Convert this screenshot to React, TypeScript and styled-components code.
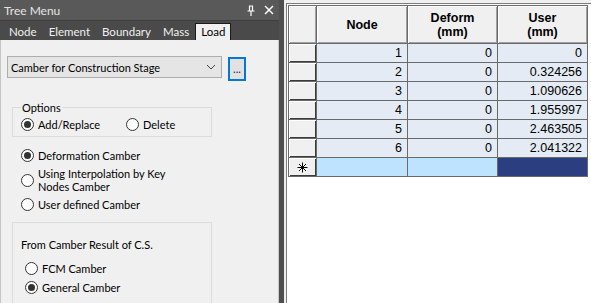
import React from 'react';
import styled, { createGlobalStyle } from 'styled-components';

const GlobalStyle = createGlobalStyle`
  html, body {
    margin: 0;
    padding: 0;
    overflow: hidden;
    background: #ffffff;
  }
`;

type Row = { node: number; deform: string; user: string };

const rows: Row[] = [
  { node: 1, deform: '0', user: '0' },
  { node: 2, deform: '0', user: '0.324256' },
  { node: 3, deform: '0', user: '1.090626' },
  { node: 4, deform: '0', user: '1.955997' },
  { node: 5, deform: '0', user: '2.463505' },
  { node: 6, deform: '0', user: '2.041322' },
];

const tabs = ['Node', 'Element', 'Boundary', 'Mass', 'Load'];

const Radio = ({ checked, children }: { checked?: boolean; children: React.ReactNode }) => (
  <RadioRow>
    <RadioCircle>{checked && <RadioDot />}</RadioCircle>
    <RadioLabel>{children}</RadioLabel>
  </RadioRow>
);

const PinIcon = () => (
  <svg width="10" height="11" viewBox="0 0 10 11">
    <path d="M3 1h4M3.5 1v5M6.5 1v5M1.5 6h7M5 6v5" stroke="#fff" strokeWidth="1.2" fill="none" />
  </svg>
);

const CloseIcon = () => (
  <svg width="10" height="10" viewBox="0 0 10 10">
    <path d="M1 1l8 8M9 1l-8 8" stroke="#fff" strokeWidth="1.5" fill="none" />
  </svg>
);

const Chevron = () => (
  <svg width="10" height="6" viewBox="0 0 10 6">
    <path d="M1 1l4 4 4-4" stroke="#444" strokeWidth="1" fill="none" />
  </svg>
);

// marker of the "new row" line in the grid
const NewRowMark = () => (
  <svg width="11" height="11" viewBox="0 0 11 11">
    <path d="M5.5 0.5v10M0.5 5.5h10M2 2l7 7M9 2l-7 7" stroke="#000" strokeWidth="1" fill="none" />
  </svg>
);

const App = () => {
  return (
    <Layout>
      <GlobalStyle />
      <LeftPanel>
        <TitleBar>
          <Title>Tree Menu</Title>
          <TitleIcons>
            <PinIcon />
            <CloseIcon />
          </TitleIcons>
        </TitleBar>
        <TabBar>
          {tabs.map((t) => (
            <Tab key={t} $active={t === 'Load'}>
              {t}
            </Tab>
          ))}
        </TabBar>
        <Content>
          <ComboRow>
            <Combo>
              <span>Camber for Construction Stage</span>
              <Chevron />
            </Combo>
            <DotsButton>...</DotsButton>
          </ComboRow>

          <Group>
            <Legend>Options</Legend>
            <InlineRadios>
              <Radio checked>Add/Replace</Radio>
              <Radio>Delete</Radio>
            </InlineRadios>
          </Group>

          <RadioList>
            <Radio checked>Deformation Camber</Radio>
            <Radio>
              Using Interpolation by Key
              <br />
              Nodes Camber
            </Radio>
            <Radio>User defined Camber</Radio>
          </RadioList>

          <ResultBox>
            <BoxTitle>From Camber Result of C.S.</BoxTitle>
            <SubRadios>
              <Radio>FCM Camber</Radio>
              <Radio checked>General Camber</Radio>
            </SubRadios>
          </ResultBox>
        </Content>
      </LeftPanel>

      <Splitter />

      <RightPanel>
        <Grid>
          <HeadCell />
          <HeadCell>Node</HeadCell>
          <HeadCell>
            Deform
            <br />
            (mm)
          </HeadCell>
          <HeadCell>
            User
            <br />
            (mm)
          </HeadCell>
          {rows.map((r) => (
            <React.Fragment key={r.node}>
              <RowHead />
              <Cell>{r.node}</Cell>
              <Cell>{r.deform}</Cell>
              <Cell>{r.user}</Cell>
            </React.Fragment>
          ))}
          <RowHead>
            <NewRowMark />
          </RowHead>
          <Cell $variant="new" />
          <Cell $variant="new" />
          <Cell $variant="selected" />
        </Grid>
      </RightPanel>
    </Layout>
  );
};

const Layout = styled.div`
  display: flex;
  width: 591px;
  height: 303px;
  overflow: hidden;
  font-family: Lato, 'Noto Sans', sans-serif;
  font-size: 11px;
  color: #000;
`;

const LeftPanel = styled.div`
  width: 279px;
  display: flex;
  flex-direction: column;
  flex-shrink: 0;
`;

const TitleBar = styled.div`
  height: 20px;
  background: #595959;
  display: flex;
  align-items: center;
  justify-content: space-between;
  padding: 0 5px 0 4px;
  box-sizing: border-box;
`;

const Title = styled.span`
  color: #e4e4e4;
  font-size: 12px;
`;

const TitleIcons = styled.div`
  display: flex;
  align-items: center;
  gap: 8px;
`;

const TabBar = styled.div`
  height: 20px;
  background: #4a4a4a;
  display: flex;
  align-items: flex-end;
  padding-left: 3px;
  border-top: 1px solid #3e3e3e;
  box-sizing: border-box;
`;

const Tab = styled.div<{ $active?: boolean }>`
  height: 17px;
  line-height: 16px;
  padding: 0 5px;
  font-size: 11.5px;
  box-sizing: border-box;
  color: ${(p) => (p.$active ? '#000' : '#f0f0f0')};
  background: ${(p) => (p.$active ? '#f0f0f0' : 'transparent')};
  border: 1px solid ${(p) => (p.$active ? '#1a1a1a' : 'transparent')};
  border-bottom: none;
`;

const Content = styled.div`
  flex: 1;
  background: #f0f0f0;
  border-left: 1px solid #c4c4c4;
  border-right: 1px solid #c8c8c8;
  padding: 16px 0 0 6px;
  display: flex;
  flex-direction: column;
`;

const ComboRow = styled.div`
  display: flex;
  align-items: flex-start;
  gap: 6px;
`;

const Combo = styled.div`
  width: 215px;
  height: 22px;
  box-sizing: border-box;
  border: 1px solid #adadad;
  background: #e5e5e5;
  display: flex;
  align-items: center;
  justify-content: space-between;
  padding: 0 5px 0 3px;
`;

const DotsButton = styled.div`
  width: 18px;
  height: 24px;
  margin-top: 1px;
  box-sizing: border-box;
  border: 2px solid #0078d7;
  background: #e1e1e1;
  display: flex;
  align-items: flex-end;
  justify-content: center;
  padding-bottom: 5px;
  font-size: 11px;
  line-height: 1;
  color: #1a1a6a;
`;

const Group = styled.fieldset`
  margin: 20px 0 0 5px;
  width: 200px;
  height: 36px;
  box-sizing: border-box;
  border: 1px solid #dcdcdc;
  padding: 0 0 0 8px;
`;

const Legend = styled.legend`
  padding: 0 1px;
  margin-left: 0;
  line-height: 13px;
`;

const InlineRadios = styled.div`
  display: grid;
  grid-template-columns: 105px auto;
  margin-top: 4px;
`;

const RadioRow = styled.div`
  display: flex;
  align-items: center;
  gap: 4px;
`;

const RadioCircle = styled.div`
  width: 13px;
  height: 13px;
  box-sizing: border-box;
  border: 1px solid #333;
  border-radius: 50%;
  background: #fff;
  display: flex;
  align-items: center;
  justify-content: center;
  flex-shrink: 0;
`;

const RadioDot = styled.div`
  width: 7px;
  height: 7px;
  border-radius: 50%;
  background: #333;
`;

const RadioLabel = styled.span`
  line-height: 13px;
`;

const RadioList = styled.div`
  display: flex;
  flex-direction: column;
  gap: 5px;
  margin: 12px 0 0 14px;
`;

const ResultBox = styled.div`
  margin: 11px 0 0 5px;
  width: 200px;
  flex: 1;
  box-sizing: border-box;
  border: 1px solid #dcdcdc;
  border-bottom: none;
  padding: 15px 0 0 8px;
`;

const BoxTitle = styled.div`
  line-height: 13px;
`;

const SubRadios = styled.div`
  display: flex;
  flex-direction: column;
  gap: 6px;
  margin: 11px 0 0 4px;
`;

const Splitter = styled.div`
  width: 5px;
  flex-shrink: 0;
  background: #4f4f4f;
`;

const RightPanel = styled.div`
  flex: 1;
  background: #fff;
  border-left: 2px solid #ececec;
  border-top: 3px solid #f0f0f0;
  box-shadow: inset 1px 1px 0 #7c7c7c;
  padding: 2px 0 0 2px;
`;

const Grid = styled.div`
  display: grid;
  grid-template-columns: 27px 90px 89px 89px;
  grid-template-rows: 37px repeat(7, 18px);
  gap: 1px;
  padding: 1px;
  width: max-content;
  background: #6a6a6a;
  font-family: 'Liberation Sans', Arial, sans-serif;
  font-size: 12.5px;
`;

const HeadCell = styled.div`
  background: #f0f0f0;
  box-shadow: inset 1px 1px 0 #fff, inset -1px -1px 0 #a0a0a0;
  font-weight: bold;
  text-align: center;
  display: flex;
  align-items: center;
  justify-content: center;
  line-height: 14px;
`;

const RowHead = styled.div`
  background: #f0f0f0;
  box-shadow: inset 1px 1px 0 #fff, inset -1px -1px 0 #3c3c3c;
  display: flex;
  align-items: center;
  justify-content: center;
`;

const Cell = styled.div<{ $variant?: 'new' | 'selected' }>`
  background: ${(p) =>
    p.$variant === 'new' ? '#bee3fe' : p.$variant === 'selected' ? '#2b3e80' : '#e4ebf5'};
  text-align: right;
  padding-right: 5px;
  line-height: 18px;
`;

export default App;
